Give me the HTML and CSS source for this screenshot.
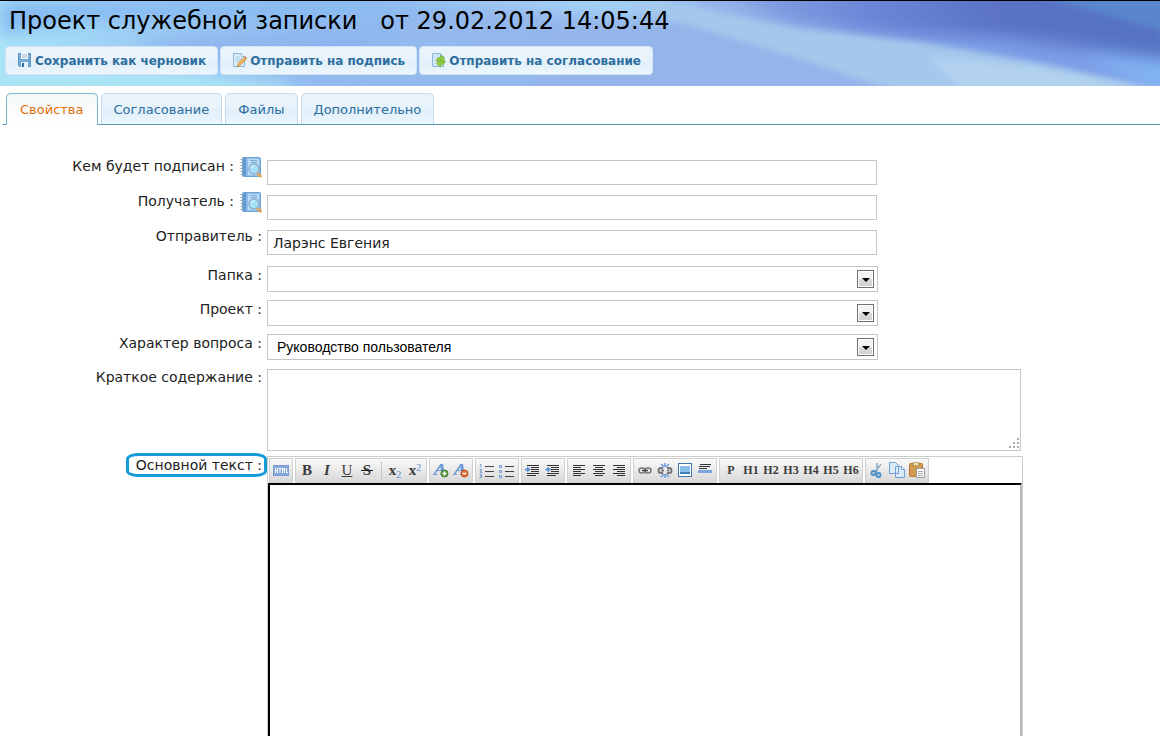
FILE: index.html
```html
<!DOCTYPE html>
<html lang="ru">
<head>
<meta charset="utf-8">
<title>Проект служебной записки</title>
<link rel="stylesheet" href="styles.css">
</head>
<body>
<svg class="defs" aria-hidden="true">
  <defs>
    <symbol id="book" viewBox="0 0 22 22">
      <rect x="2.5" y="1.500" width="18" height="19" rx="1" fill="#8dbde8" stroke="#6aa3d6"/>
      <rect x="3" y="2" width="3" height="18" fill="#5c98ce"/>
      <rect x="8" y="3" width="11" height="16" fill="#b9dbf5"/>
      <path d="M10 4.500h7M11 6.500h6" stroke="#7cabd8"/>
      <path d="M0.500 3.500h4M.5 6.500h4M.5 9.500h4M.5 12.500h4M.5 15.500h4M.5 18.500h4" stroke="#8fa6ba"/>
      <circle cx="14" cy="13" r="5" fill="#a4e0f8" stroke="#8fb0cc" stroke-width="1.500"/>
      <path d="M11 12q1-2 3-2" stroke="#fff" fill="none"/>
      <path d="M18 18l2.500 2" stroke="#dca868" stroke-width="3" stroke-linecap="round"/>
    </symbol>
  </defs>
</svg>
<header class="header">
  <svg class="header-art" viewBox="0 0 1160 85" preserveAspectRatio="none" aria-hidden="true">
    <defs>
      <linearGradient id="sky"><stop offset="0" stop-color="#a9e4f8"/><stop offset=".09" stop-color="#9fd2f5"/><stop offset=".26" stop-color="#94bdf0"/><stop offset=".55" stop-color="#94b4ea"/><stop offset="1" stop-color="#94b4ea"/></linearGradient>
      <linearGradient id="deep"><stop offset="0" stop-color="#90b4ea"/><stop offset=".35" stop-color="#6c88d8"/><stop offset=".6" stop-color="#5a72c6"/><stop offset="1" stop-color="#5474c0"/></linearGradient>
      <filter id="soft" x="-20%" y="-50%" width="140%" height="200%"><feGaussianBlur stdDeviation="8"/></filter>
      <filter id="fine" x="-20%" y="-50%" width="140%" height="200%"><feGaussianBlur stdDeviation="3"/></filter>
    </defs>
    <rect width="1160" height="85" fill="url(#sky)"/>
    <g filter="url(#soft)">
      <path d="M0 0H520L320 16L90 20L0 34Z" fill="#86baf2"/>
      <path d="M0 58L150 66L290 85V100H0Z" fill="#ace4f6"/>
      <path d="M130 40L420 24L330 74L190 60Z" fill="#8db5ef"/>
      <path d="M350 -10H640L720 14L610 16Z" fill="#a5d2f6"/>
      <path d="M670 -30H1220V120L980 50L780 20Z" fill="url(#deep)"/>
      <path d="M840 30L1000 36L1200 64V110L980 56Z" fill="#7c9ce6"/>
      <path d="M1080 54L1200 62V110Z" fill="#82b4f4"/>
    </g>
    <g filter="url(#fine)">
      <path d="M1040 -4H1180V34Z" fill="#5a86ce"/>
      <path d="M620 2L690 6L800 28L930 43L1040 62L1180 92H900L800 58L690 24Z" fill="#a4c8ec"/>
      <path d="M930 56L1030 66L1140 86H960Z" fill="#b2d2ee"/>
    </g>
  </svg>
  <h1 class="title">Проект служебной записки&nbsp;&nbsp; от 29.02.2012 14:05:44</h1>
  <div class="actions">
    <button class="action" type="button">
      <svg width="16" height="16" viewBox="0 0 16 16"><path d="M1.500 .5h12v13h-11l-1-1z" fill="#74aad8" stroke="#5492c4"/><path d="M4 0h7v6H4z" fill="#f3f8fc"/><path d="M5 2h5M5 4h5" stroke="#a8b6c2"/><path d="M4 9h7v5H4z" fill="#e6f2fa"/><path d="M5 10h2v4H5z" fill="#346d9e"/></svg>
      Сохранить как черновик</button>
    <button class="action" type="button">
      <svg width="16" height="16" viewBox="0 0 16 16"><path d="M1.500.5h8l3 3v10h-11z" fill="#dcecf8" stroke="#91b9d7"/><path d="M9.500.5v3h3" fill="#fff" stroke="#91b9d7"/><path d="M3 4h5M3 6h7M3 8h5" stroke="#afd0e8"/><path d="M6 10.500L12.500 4l2 2L8 12.500L5 14z" fill="#efb454" stroke="#ae7e40" stroke-width=".6"/><path d="M12.500 4l2 2 .5-1-2-2z" fill="#d87559"/></svg>
      Отправить на подпись</button>
    <button class="action" type="button">
      <svg width="16" height="16" viewBox="0 0 16 16"><path d="M1.500.5h8l3 3v10h-11z" fill="#cfe6f5" stroke="#91b9d7"/><path d="M9.500.5v3h3" fill="#fff" stroke="#91b9d7"/><path d="M5 8q1-4 5-4V2l4 3.500L10 9V7Q8 7 7.500 8.500z" fill="#91cb3e" stroke="#6ba832" stroke-width=".6"/><path d="M14.500 8q-1 4-5 4v2l-4-3.500L9.500 7v2q2 0 2.500-1.500z" fill="#91cb3e" stroke="#6ba832" stroke-width=".6"/></svg>
      Отправить на согласование</button>
  </div>
</header>
<nav class="tabs">
  <a class="tab tab-active" href="#properties">Свойства</a>
  <a class="tab" href="#approval">Согласование</a>
  <a class="tab" href="#files">Файлы</a>
  <a class="tab" href="#extra">Дополнительно</a>
</nav>
<form class="form" id="properties">
  <div class="row row-text">
    <div class="label-cell"><label for="signer">Кем будет подписан :</label><button class="lookup" type="button" aria-label="Выбрать"><svg width="22" height="22"><use href="#book"/></svg></button></div>
    <input class="control" id="signer" type="text">
  </div>
  <div class="row row-text">
    <div class="label-cell"><label for="recipient">Получатель :</label><button class="lookup" type="button" aria-label="Выбрать"><svg width="22" height="22"><use href="#book"/></svg></button></div>
    <input class="control" id="recipient" type="text">
  </div>
  <div class="row row-text">
    <div class="label-cell"><label for="sender">Отправитель :</label></div>
    <input class="control" id="sender" type="text" value="Ларэнс Евгения">
  </div>
  <div class="row row-select row-first">
    <div class="label-cell"><label for="folder">Папка :</label></div>
    <div class="select"><select id="folder"><option></option></select></div>
  </div>
  <div class="row row-select">
    <div class="label-cell"><label for="project">Проект :</label></div>
    <div class="select"><select id="project"><option></option></select></div>
  </div>
  <div class="row row-select">
    <div class="label-cell"><label for="kind">Характер вопроса :</label></div>
    <div class="select"><select id="kind"><option>Руководство пользователя</option></select></div>
  </div>
  <div class="row row-area">
    <div class="label-cell"><label for="summary">Краткое содержание :</label></div>
    <div class="summary"><textarea id="summary"></textarea>
      <svg class="grip" width="12" height="12" viewBox="0 0 12 12" fill="#aaa" aria-hidden="true"><path d="M9 0h2v2H9zM5 4h2v2H5zM9 4h2v2H9zM1 8h2v2H1zM5 8h2v2H5zM9 8h2v2H9z"/></svg></div>
  </div>
  <div class="row row-editor">
    <div class="label-cell"><label class="marked" for="body">Основной текст :</label></div>
    <div class="editor">
      <div class="toolbar">
        <div class="group">
          <button type="button" aria-label="HTML"><svg width="16" height="16"><rect x=".5" y="3.500" width="15" height="10" fill="#84a7dc" stroke="#7c9ed4"/><path d="M2.500 6v5M4.500 6v5M2.500 8.500h2M5.500 6.500h3M7 6v5M9.500 11V6l1 2 1-2v5M13.500 6v4.500H15" stroke="#fff" fill="none"/></svg></button>
        </div>
        <div class="group">
          <button type="button" class="glyph"><b>B</b></button>
          <button type="button" class="glyph"><b><i>I</i></b></button>
          <button type="button" class="glyph"><u>U</u></button>
          <button type="button" class="glyph strike"><b>S</b></button>
          <span class="divider"></span>
          <button type="button" class="glyph"><b>x</b><sub>2</sub></button>
          <button type="button" class="glyph"><b>x</b><sup>2</sup></button>
        </div>
        <div class="group">
          <button type="button" aria-label="Увеличить"><svg width="16" height="16"><path d="M1.500 12L8 2.500" stroke="#6b98d8" stroke-width="1.500"/><path d="M8.500 2L10 12" stroke="#6b98d8" stroke-width="3"/><path d="M4 8.500h5M0 12.500h4M7 12.500h4" stroke="#6b98d8"/><circle cx="11.500" cy="11.500" r="3.500" fill="#5ba03e" stroke="#397a28"/><path d="M9.500 11.500h4M11.500 9.500v4" stroke="#fff" stroke-width="1.500"/></svg></button>
          <button type="button" aria-label="Уменьшить"><svg width="16" height="16"><path d="M1.500 12L8 2.500" stroke="#6b98d8" stroke-width="1.500"/><path d="M8.500 2L10 12" stroke="#6b98d8" stroke-width="3"/><path d="M4 8.500h5M0 12.500h4M7 12.500h4" stroke="#6b98d8"/><circle cx="11.500" cy="11.500" r="3.500" fill="#e56f32" stroke="#bd4c1a"/><path d="M9.500 11.500h4" stroke="#fff" stroke-width="1.500"/></svg></button>
        </div>
        <div class="group">
          <button type="button" aria-label="Нумерованный список"><svg width="16" height="16"><path d="M6 4.500h9M6 9.500h9M6 14.500h9" stroke="#444"/><path d="M1 2.500h1v3M.5 7.500h2v1.500h-1v1.500h2M.5 12.500h2v3h-2M1 14h1" fill="none" stroke="#739bd4"/></svg></button>
          <button type="button" aria-label="Маркированный список"><svg width="16" height="16"><path d="M6 4.500h9M6 9.500h9M6 14.500h9" stroke="#444"/><path d="M.5 3.500h2v2h-2zM.5 8.500h2v2h-2zM.5 13.500h2v2h-2z" fill="#cfe0f8" stroke="#739bd4"/></svg></button>
        </div>
        <div class="group">
          <button type="button" aria-label="Увеличить отступ"><svg width="16" height="16"><path d="M2 3.500h12M6 5.500h8M6 7.500h8M6 9.500h8M2 11.500h12M2 13.500h9" stroke="#333"/><path d="M0 7.500h3" stroke="#5f93d8" stroke-width="2"/><path d="M2 4.500l4 3-4 3z" fill="#5f93d8"/></svg></button>
          <button type="button" aria-label="Уменьшить отступ"><svg width="16" height="16"><path d="M2 3.500h12M6 5.500h8M6 7.500h8M6 9.500h8M2 11.500h12M2 13.500h9" stroke="#333"/><path d="M2 7.500h4" stroke="#5f93d8" stroke-width="2"/><path d="M4 4.500l-4 3 4 3z" fill="#5f93d8"/></svg></button>
        </div>
        <div class="group">
          <button type="button" aria-label="По левому краю"><svg width="16" height="16"><path d="M2 3.500h12M2 5.500h8M2 7.500h12M2 9.500h8M2 11.500h12M2 13.500h8" stroke="#333"/></svg></button>
          <button type="button" aria-label="По центру"><svg width="16" height="16"><path d="M2 3.500h12M4 5.500h8M2 7.500h12M4 9.500h8M2 11.500h12M4 13.500h8" stroke="#333"/></svg></button>
          <button type="button" aria-label="По правому краю"><svg width="16" height="16"><path d="M2 3.500h12M6 5.500h8M2 7.500h12M6 9.500h8M2 11.500h12M6 13.500h8" stroke="#333"/></svg></button>
        </div>
        <div class="group">
          <button type="button" aria-label="Ссылка"><svg width="16" height="16" fill="none" stroke="#777" stroke-width="1.500"><rect x="2" y="6" width="6" height="5" rx="2.500"/><rect x="8" y="6" width="6" height="5" rx="2.500"/><path d="M5 8.500h6" stroke="#444"/></svg></button>
          <button type="button" aria-label="Убрать ссылку"><svg width="16" height="16" fill="none" stroke="#777" stroke-width="2"><path d="M6 6H4a2.500 2.500 0 0 0 0 5h2M10 6h2a2.500 2.500 0 0 1 0 5h-2M4 8.500h3M10 8.500h2"/><path d="M4 2l3 3M8 1v4M12 2L9 5M4 15l3-3M8 12v4M12 15l-3-3" stroke="#6c9ce0" stroke-width="1.500"/></svg></button>
          <button type="button" aria-label="Изображение"><svg width="16" height="16"><rect x="1.500" y="1.500" width="13" height="13" fill="#fff" stroke="#4177ae"/><rect x="3" y="4" width="10" height="8" fill="#8cc0ec"/><path d="M3 10h10v2H3z" fill="#3e7eb4"/></svg></button>
          <button type="button" aria-label="Линия"><svg width="16" height="16"><path d="M3 2.500h11M2 4.500h11M2 6.500h8" stroke="#333"/><rect x="1" y="8" width="14" height="3" fill="#7ca4dc"/></svg></button>
        </div>
        <div class="group">
          <button type="button" class="heading">P</button>
          <button type="button" class="heading">H1</button>
          <button type="button" class="heading">H2</button>
          <button type="button" class="heading">H3</button>
          <button type="button" class="heading">H4</button>
          <button type="button" class="heading">H5</button>
          <button type="button" class="heading">H6</button>
        </div>
        <div class="group">
          <button type="button" aria-label="Вырезать"><svg width="16" height="16" fill="none"><path d="M8 1v9M12 2L6 10" stroke="#86a9c7" stroke-width="1.500"/><circle cx="4.500" cy="11" r="2" stroke="#4a90c8" stroke-width="2"/><circle cx="9.500" cy="13" r="2" stroke="#4a90c8" stroke-width="2"/></svg></button>
          <button type="button" aria-label="Копировать"><svg width="16" height="16" fill="#dcebfa" stroke="#729fd2"><path d="M.5.5h6l3 3v8h-9zM6.500 4.500h6l3 3v8h-9z"/><path d="M12.500 4.500v3h3" fill="#fff"/></svg></button>
          <button type="button" aria-label="Вставить"><svg width="16" height="16"><rect x=".5" y="1.500" width="13" height="13" rx="1" fill="#d29a4d" stroke="#b37a34"/><rect x="4" y="0" width="6" height="4" rx="1" fill="#f0dca0" stroke="#8e7654" stroke-width=".8"/><path d="M7.500 6.500h8v9h-8z" fill="#fff" stroke="#999"/><path d="M9 9.500h5M9 11.500h5M9 13.500h5" stroke="#aaa"/></svg></button>
        </div>
      </div>
      <textarea class="body" id="body"></textarea>
    </div>
  </div>
</form>
</body>
</html>
```

FILE: styles.css
```css
*, ::before, ::after { box-sizing: border-box; }
html, body { height: 100%; }
body {
  margin: 0;
  display: flex;
  flex-direction: column;
  overflow: hidden;
  background: #fff;
  color: #222;
  font-family: "DejaVu Sans", sans-serif;
  font-size: 14px;
}
button, input, select, textarea { font: inherit; color: inherit; margin: 0; border-radius: 0; }
.defs { display: none; }

.header {
  position: relative;
  flex: none;
  border-top: 1px solid #000;
  padding: 5px 6px 11px 5px;
}
.header-art { position: absolute; inset: 0; width: 100%; height: 100%; }
.title {
  position: relative;
  margin: 0 0 10px;
  padding-left: 4px;
  font-size: 24px;
  line-height: 30px;
  font-weight: 400;
  color: #000;
  white-space: nowrap;
}
.actions { position: relative; display: flex; gap: 2px; }
.action {
  display: flex;
  align-items: center;
  gap: 2px;
  height: 29px;
  padding: 0 11px;
  border: 1px solid #d4e4f6;
  border-radius: 4px;
  background: linear-gradient(#e8f3fc 0 50%, #e0eff9 50%, #ecf6fd);
  color: #2e6e9e;
  font-size: 12px;
  font-weight: 700;
  white-space: nowrap;
}

.tabs {
  flex: none;
  display: flex;
  gap: 3px;
  margin: 7px 0 0 3px;
  padding-left: 3px;
  border-bottom: 1px solid #5c9ab4;
}
.tab {
  height: 31px;
  padding: 0 12px;
  border: 1px solid #c5dbec;
  border-bottom: 0;
  border-radius: 5px 5px 0 0;
  background: linear-gradient(#e8f3fc 0 50%, #e0eff9 50%, #ecf6fd);
  color: #2e6e9e;
  font-size: 13px;
  line-height: 31px;
  text-decoration: none;
}
.tab-active {
  height: 32px;
  margin-bottom: -1px;
  padding: 0 13px;
  border-color: #79b7d7;
  background: linear-gradient(#f5f8f9, #fff);
  color: #e17009;
}

.form { flex: 1; display: flex; flex-direction: column; padding-top: 31px; }
.row { display: grid; grid-template-columns: 262px minmax(0, 1fr); column-gap: 5px; padding-right: 137px; }
.label-cell { display: flex; justify-content: flex-end; align-items: flex-start; gap: 6px; line-height: 20px; }
.lookup { width: 22px; height: 22px; padding: 0; border: 0; background: none; }
.lookup svg { display: block; }

.row-text { margin-bottom: 6px; }
.control {
  width: 100%;
  max-width: 610px;
  height: 25px;
  margin-top: 4px;
  padding: 0 5px;
  border: 1px solid #c6c6c6;
  background: #fff;
}
.row-first { margin-top: 4px; }
.row-select { margin-bottom: 7px; }
.select { position: relative; max-width: 611px; height: 26px; margin-top: 1px; }
.select select {
  width: 100%;
  height: 100%;
  padding: 0 9px;
  border: 1px solid #c6c6c6;
  background: #fff;
  appearance: none;
  color: #000;
  font-family: "Liberation Sans", sans-serif;
}
.select::before {
  content: "";
  position: absolute;
  top: 4px;
  right: 4px;
  width: 17px;
  height: 18px;
  border: 1px solid #707070;
  background: linear-gradient(#f2f2f2 0 50%, #dcdcdc 50%, #cfcfcf);
  box-shadow: inset 0 0 0 1px #fff;
  pointer-events: none;
}
.select::after {
  content: "";
  position: absolute;
  top: 12px;
  right: 8px;
  border: 4px solid transparent;
  border-top-color: #000;
  border-bottom: 0;
  pointer-events: none;
}
.summary { position: relative; max-width: 754px; height: 82px; margin-top: 2px; }
.summary textarea { width: 100%; height: 100%; border: 1px solid #c6c6c6; resize: none; }
.grip { position: absolute; right: 1px; bottom: 1px; }

.row-area { margin-bottom: 4px; }
.row-editor { flex: 1; }
.marked { position: relative; }
.marked::after {
  content: "";
  position: absolute;
  inset: -2px -5px -2px -10px;
  border: 3px solid #169bd7;
  border-radius: 12px / 6px;
}
.editor {
  display: flex;
  flex-direction: column;
  margin-top: 1px;
  border: 1px solid #ccc;
  border-bottom: 0;
}
.toolbar { display: flex; flex-wrap: wrap; gap: 2px; padding: 1px 1px 0; }
.group {
  display: flex;
  height: 25px;
  padding: 0 1px;
  border: 1px solid #d0d0d0;
  background: linear-gradient(#fafafa, #d8d8d8);
}
.group button {
  display: flex;
  align-items: center;
  justify-content: center;
  width: 20px;
  height: 22px;
  padding: 0;
  border: 0;
  background: none;
  color: #3c3c3c;
}
.group .glyph { font-family: "Liberation Serif", serif; font-size: 15px; line-height: 16px; }
.strike { position: relative; }
.strike::after {
  content: "";
  position: absolute;
  inset: 11px 4px auto;
  height: 1px;
  background: #222;
}
.group sub, .group sup { color: #5f8fd0; font-size: 10px; line-height: 9px; }
.group sub { align-self: flex-end; padding-bottom: 2px; }
.group sup { align-self: flex-start; padding-top: 4px; }
.group .heading { font-family: "Liberation Serif", serif; font-size: 12px; font-weight: 700; }
.divider { width: 1px; height: 17px; margin: 3px 3px 3px 4px; background: #c4c4c4; }
.body {
  flex: 1;
  width: 100%;
  border: 2px solid #000;
  border-right-color: #bbb;
  border-bottom: 0;
  resize: none;
}
textarea, input, select { outline: 0; }
```
